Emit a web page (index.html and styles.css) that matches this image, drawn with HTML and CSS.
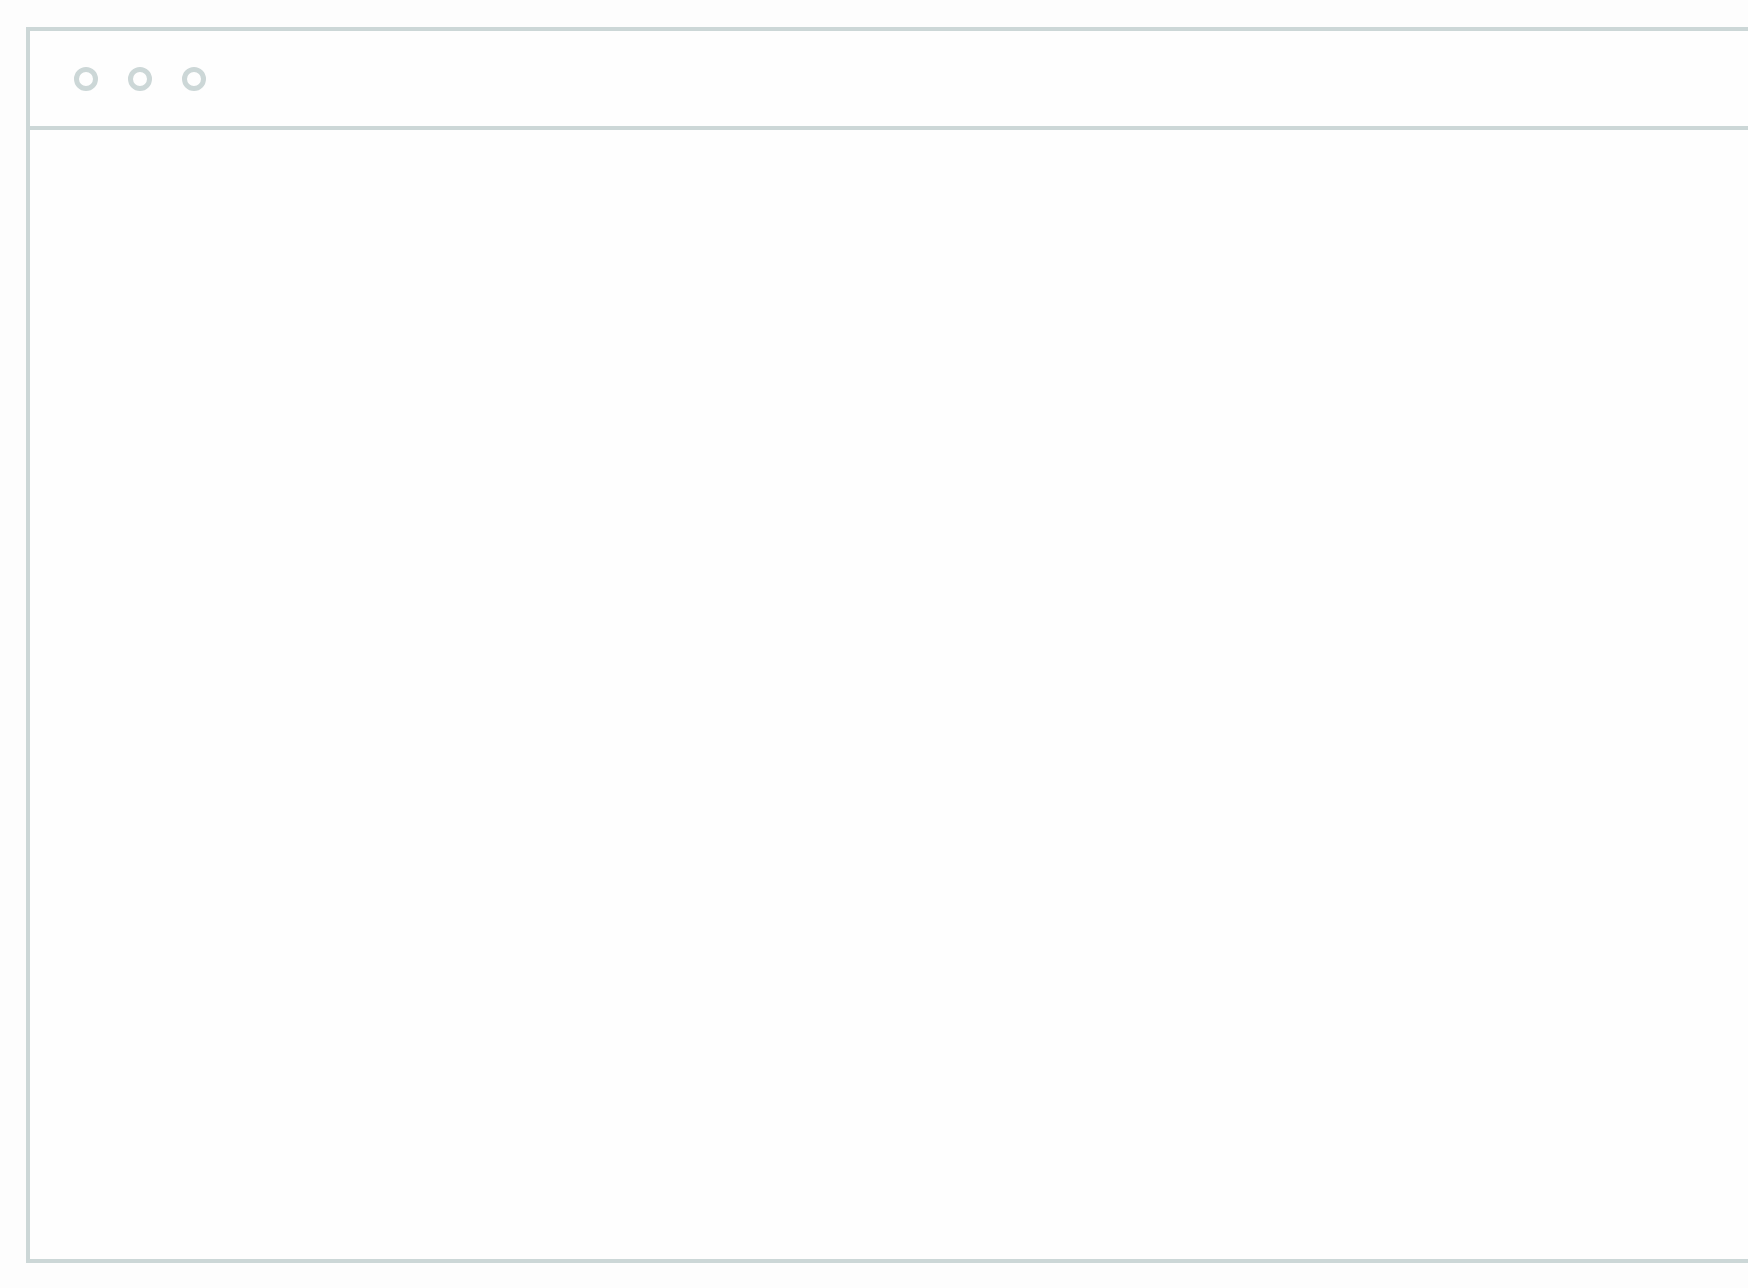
FILE: index.html
```html
<!DOCTYPE html>
<html lang="en">
<head>
<meta charset="utf-8">
<title>Window</title>
<link rel="stylesheet" href="styles.css">
</head>
<body>
  <div class="window">
    <div class="titlebar">
      <span class="dot"></span>
      <span class="dot"></span>
      <span class="dot"></span>
    </div>
    <div class="content"></div>
  </div>
</body>
</html>
```
FILE: styles.css
```css
html, body {
  margin: 0;
  padding: 0;
  background: #fdfdfd;
  overflow: hidden;
  font-family: "Liberation Sans", Arial, sans-serif;
}
.window {
  margin: 27px 0 0 26px;
  width: 1800px;
  border: 4px solid #ccd7d7;
  background: #fefefe;
}
.titlebar {
  height: 95px;
  display: flex;
  align-items: center;
  gap: 30px;
  padding-left: 44px;
  border-bottom: 4px solid #ccd7d7;
}
.dot {
  width: 24px;
  height: 24px;
  box-sizing: border-box;
  border: 5px solid #ccd7d7;
  border-radius: 50%;
  background: #fefefe;
}
.content {
  height: 1129px;
}
```
